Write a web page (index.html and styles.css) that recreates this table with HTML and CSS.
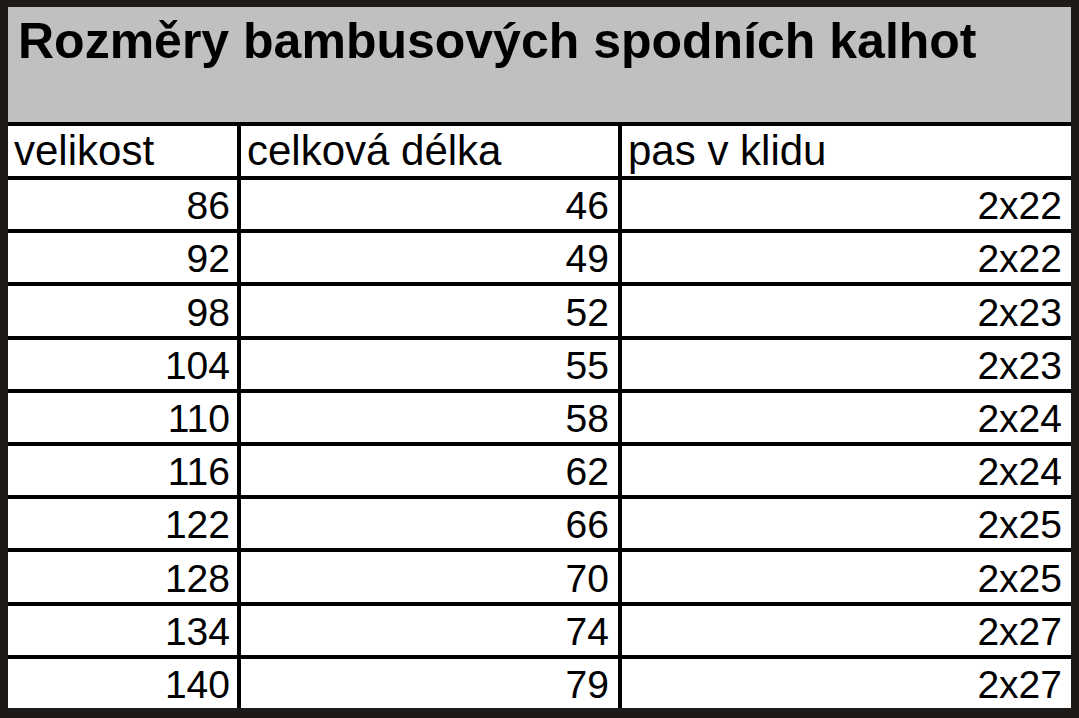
FILE: index.html
```html
<!DOCTYPE html>
<html lang="cs">
<head>
<meta charset="utf-8">
<title>Rozměry bambusových spodních kalhot</title>
<link rel="stylesheet" href="styles.css">
</head>
<body>
<div class="sheet">
  <div class="title">
    <h1>Rozměry bambusových spodních kalhot</h1>
  </div>
  <div class="table">
    <div class="cell head">velikost</div>
    <div class="cell head">celková délka</div>
    <div class="cell head">pas v klidu</div>

    <div class="cell num">86</div><div class="cell num">46</div><div class="cell num">2x22</div>
    <div class="cell num">92</div><div class="cell num">49</div><div class="cell num">2x22</div>
    <div class="cell num">98</div><div class="cell num">52</div><div class="cell num">2x23</div>
    <div class="cell num">104</div><div class="cell num">55</div><div class="cell num">2x23</div>
    <div class="cell num">110</div><div class="cell num">58</div><div class="cell num">2x24</div>
    <div class="cell num">116</div><div class="cell num">62</div><div class="cell num">2x24</div>
    <div class="cell num">122</div><div class="cell num">66</div><div class="cell num">2x25</div>
    <div class="cell num">128</div><div class="cell num">70</div><div class="cell num">2x25</div>
    <div class="cell num">134</div><div class="cell num">74</div><div class="cell num">2x27</div>
    <div class="cell num">140</div><div class="cell num">79</div><div class="cell num">2x27</div>
  </div>
</div>
</body>
</html>
```
FILE: styles.css
```css
* { box-sizing: border-box; }
html, body {
  margin: 0;
  padding: 0;
  background: #ffffff;
}
.sheet {
  width: 1079px;
  height: 718px;
  border-style: solid;
  border-color: #1e1a17;
  border-width: 7px 8px 10px 8px;
  display: flex;
  flex-direction: column;
  font-family: "Liberation Sans", Arial, sans-serif;
  color: #000;
}
.title {
  height: 115px;
  flex: none;
  background: #c0c0c0;
  padding: 9px 0 0 10px;
}
.title h1 {
  margin: 0;
  font-size: 50px;
  line-height: 50px;
  font-weight: bold;
}
.table {
  flex: 1;
  display: grid;
  grid-template-columns: 229px 381px 453px;
  grid-template-rows: 50px repeat(10, 1fr);
  background: #000;
  border-top: 4px solid #000;
}
.cell {
  background: #fff;
  display: flex;
  align-items: flex-end;
  line-height: 1;
  white-space: nowrap;
}
.cell:nth-child(3n+2), .cell:nth-child(3n) {
  border-left: 4px solid #000;
}
.cell.num {
  border-top: 4px solid #000;
  justify-content: flex-end;
  font-size: 39px;
  padding: 0 9px 4px 0;
}
.cell.num:nth-child(3n+1) {
  padding-right: 7px;
}
.cell.head {
  font-size: 42px;
  padding: 0 0 4px 6px;
}
```
